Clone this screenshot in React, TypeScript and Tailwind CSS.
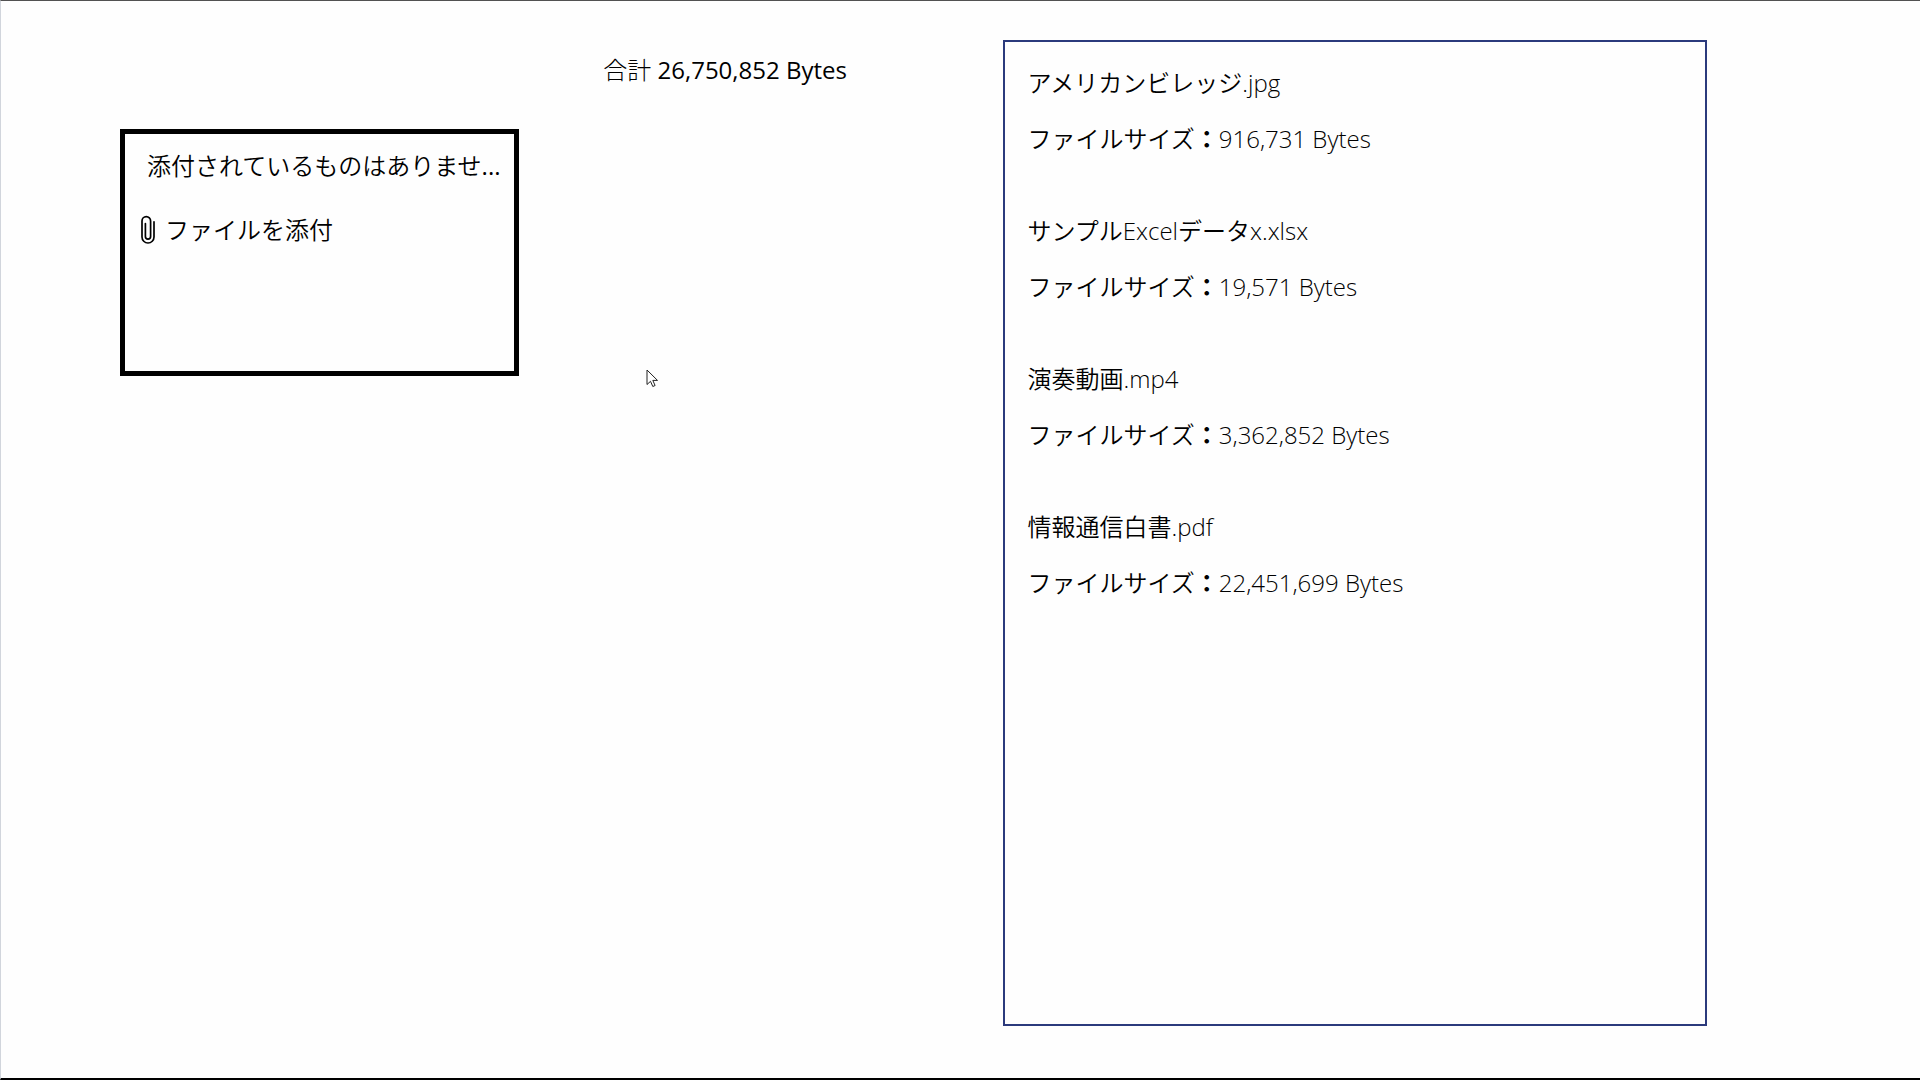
const files = [
  { name: "アメリカンビレッジ.jpg", size: 916731 },
  { name: "サンプルExcelデータx.xlsx", size: 19571 },
  { name: "演奏動画.mp4", size: 3362852 },
  { name: "情報通信白書.pdf", size: 22451699 },
];

const total = 26750852;

function bytes(n: number) {
  return n.toLocaleString("en-US") + " Bytes";
}

// Latin runs stay light while Japanese runs are a step heavier.
function FileName({ name }: { name: string }) {
  return (
    <p>
      {name.split(/([\x20-\x7e]+)/).map((run, i) =>
        i % 2 === 0 ? (
          <span key={i} className="font-[350]">
            {run}
          </span>
        ) : (
          run
        ),
      )}
    </p>
  );
}

function PaperclipIcon() {
  return (
    <svg
      width="14"
      height="30"
      viewBox="0 0 14 30"
      fill="none"
      stroke="currentColor"
      strokeWidth="1.7"
      strokeLinecap="round"
      aria-hidden="true"
      className="shrink-0"
    >
      <path d="M13 6.800V22a6 6 0 0 1-12 0V6a4.300 4.300 0 0 1 8.600 0v15.500a2.600 2.600 0 0 1-5.200 0V8.500" />
    </svg>
  );
}

function MousePointer() {
  return (
    <svg
      width="13"
      height="19"
      viewBox="0 0 13 19"
      aria-hidden="true"
      className="pointer-events-none absolute left-[33.6%] top-[368px]"
    >
      <path
        d="M1 1v14.500l3.500-3.200 2.300 5.200 2.300-1-2.300-5.100h4.700z"
        fill="#fff"
        stroke="#222"
        strokeWidth="1"
      />
    </svg>
  );
}

export default function App() {
  return (
    <main className="relative grid min-h-screen grid-cols-[399fr_84fr_399fr_704fr] border-b-2 border-l border-t border-b-black border-l-gray-300 border-t-neutral-600 bg-[#fefefe] pb-[52px] pl-[6.2%] pr-[11.1%] pt-[39px] font-['Open_Sans','Noto_Sans_CJK_JP',sans-serif] text-2xl text-black">
      <section className="mt-[89px] h-[247px] self-start border-5 border-black">
        <p className="truncate pl-[22px] pr-1 pt-3.5 leading-9">
          <span className="font-[350]">添付されているものはありませ</span>...
        </p>
        <button
          type="button"
          className="mt-7 flex cursor-pointer items-center gap-2.5 pl-4 font-[350] leading-9"
        >
          <PaperclipIcon />
          ファイルを添付
        </button>
      </section>

      <p className="col-start-3 mt-3 whitespace-nowrap leading-9">
        <span className="font-light">合計</span> {bytes(total)}
      </p>

      <ul className="border-2 border-[#2b3a7c] px-[23px] pt-[23px] font-light">
        {files.map((f) => (
          <li key={f.name} className="mb-14 flex flex-col gap-5 leading-9">
            <FileName name={f.name} />
            <p>
              <span className="font-[350]">ファイルサイズ</span>
              <span className="font-bold">：</span>
              {bytes(f.size)}
            </p>
          </li>
        ))}
      </ul>

      <MousePointer />
    </main>
  );
}
